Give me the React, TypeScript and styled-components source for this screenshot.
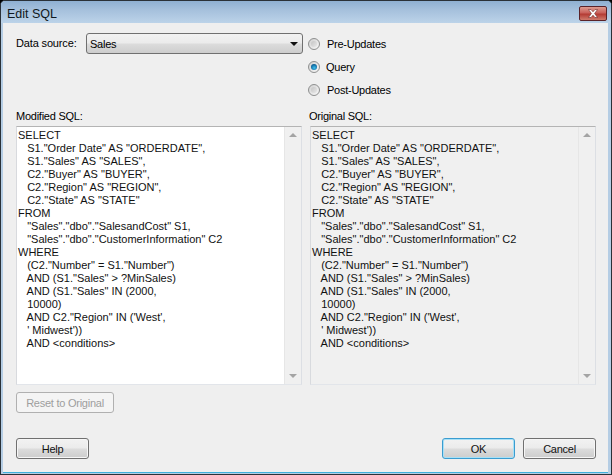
import React from "react";
import styled, { createGlobalStyle } from "styled-components";

const Global = createGlobalStyle`
  html, body { margin: 0; padding: 0; background: #000; }
  body { font-family: "Liberation Sans", Arial, sans-serif; font-size: 11px; color: #000; letter-spacing: -0.25px; }
`;

const Window = styled.div`
  box-sizing: border-box;
  width: 612px;
  height: 475px;
  display: flex;
  flex-direction: column;
  border: 1px solid #2a3138;
  border-radius: 5px 5px 0 0;
  background: #b5cde4;
  overflow: hidden;
`;

const TitleBar = styled.div`
  flex: none;
  height: 22px;
  display: flex;
  align-items: center;
  justify-content: space-between;
  padding: 0 4px 0 6px;
  background: linear-gradient(#8fb0d2, #a5c0dc 40%, #bcd3e9);
`;

const Title = styled.span`
  font-size: 12.5px;
  letter-spacing: 0;
  color: #101820;
  margin-top: 3px;
`;

const CloseButton = styled.div`
  width: 28px;
  height: 15px;
  margin-top: 2px;
  box-sizing: border-box;
  display: flex;
  align-items: center;
  justify-content: center;
  border: 1px solid #5a2228;
  border-radius: 2px;
  background: linear-gradient(#dd9c90, #c9605a 45%, #b43c34 55%, #cf7a6c);
`;

const Body = styled.div`
  flex: 1;
  margin: 0 3px 2px 2px;
  padding: 0 12px 13px 13px;
  box-sizing: border-box;
  display: flex;
  flex-direction: column;
  background: #efefef;
  box-shadow: 0 1px 0 #3fb0dc;
`;

const TopRow = styled.div`
  display: flex;
  height: 85px;
  padding-top: 10px;
  box-sizing: border-box;
`;

const SourceLabel = styled.label`
  width: 70px;
  margin-top: 3px;
  line-height: 14px;
  letter-spacing: -0.15px;
`;

const Select = styled.div`
  box-sizing: border-box;
  width: 217px;
  height: 21px;
  display: flex;
  align-items: center;
  justify-content: space-between;
  padding: 0 3px 0 3px;
  border: 1px solid #707070;
  border-radius: 3px;
  background: linear-gradient(#f2f2f2 0, #ebebeb 48%, #dcdcdc 52%, #cdcdcd 100%);
`;

const Caret = styled.div`
  width: 0;
  height: 0;
  border-left: 4px solid transparent;
  border-right: 4px solid transparent;
  border-top: 4px solid #111;
  margin-right: 1px;
`;

const RadioGroup = styled.div`
  margin-left: 5px;
  display: flex;
  flex-direction: column;
  gap: 10px;
  padding-top: 4px;
`;

const RadioRow = styled.div`
  display: flex;
  align-items: center;
  height: 13px;
  gap: ${(p) => (p.$tight ? 6 : 7)}px;
`;

const RadioDot = styled.div`
  box-sizing: border-box;
  width: 12px;
  height: 12px;
  border-radius: 50%;
  border: 1px solid #8e8f8f;
  display: flex;
  align-items: center;
  justify-content: center;
  background: linear-gradient(135deg, #d0d0d0, #f8f8f8);
  &::after {
    content: "";
    width: 6px;
    height: 6px;
    border-radius: 50%;
    background: ${(p) =>
      p.$on
        ? "radial-gradient(circle at 55% 65%, #3fc0ee, #0b5f96 70%, #0b3f6e)"
        : "linear-gradient(135deg, #c4c4c4, #e8e8e8)"};
  }
`;

const Panels = styled.div`
  display: grid;
  grid-template-columns: 286px 286px;
  column-gap: 8px;
`;

const Panel = styled.div`
  display: flex;
  flex-direction: column;
`;

const PanelLabel = styled.label`
  height: 17px;
  line-height: 14px;
  margin-top: 1px;
  margin-left: ${(p) => (p.$offset ? "-1px" : "0")};
`;

const SqlBox = styled.div`
  box-sizing: border-box;
  height: 259px;
  display: flex;
  justify-content: space-between;
  border: 1px solid;
  border-color: #b4b4b4 #dcdfe4 #e2e5ea #d8dade;
  background: ${(p) => (p.$disabled ? "#f0f0f0" : "#fff")};
`;

const SqlText = styled.pre`
  margin: 0;
  padding: 2px 0 0 1px;
  font-family: inherit;
  font-size: 11px;
  letter-spacing: 0;
  line-height: 13px;
  color: #111;
`;

const Scrollbar = styled.div`
  width: 17px;
  flex: none;
  box-sizing: border-box;
  display: flex;
  flex-direction: column;
  justify-content: space-between;
  align-items: center;
  padding: 6px 0;
  background: #f0f0f0;
  border-left: 1px solid #e6e6e6;
`;

const ArrowUp = styled.div`
  width: 0;
  height: 0;
  border-left: 4px solid transparent;
  border-right: 4px solid transparent;
  border-bottom: 4px solid #a4a4a4;
`;

const ArrowDown = styled.div`
  width: 0;
  height: 0;
  border-left: 4px solid transparent;
  border-right: 4px solid transparent;
  border-top: 4px solid #a4a4a4;
`;

const ResetButton = styled.button`
  box-sizing: border-box;
  width: 98px;
  height: 21px;
  margin-top: 7px;
  padding: 0;
  border: 1px solid #b0b0b0;
  border-radius: 3px;
  background: #f4f4f4;
  color: #9e9e9e;
  font: inherit;
  letter-spacing: inherit;
`;

const Footer = styled.div`
  margin-top: auto;
  display: flex;
  align-items: center;
`;

const DialogButton = styled.button`
  box-sizing: border-box;
  width: 73px;
  height: 21px;
  padding: 0;
  border: 1px solid ${(p) => (p.$primary ? "#3a9cd0" : "#707070")};
  border-radius: 3px;
  background: linear-gradient(#f2f2f2 0, #ebebeb 48%, #dcdcdc 52%, #cdcdcd 100%);
  box-shadow: ${(p) => (p.$primary ? "inset 0 0 0 1px #a8e0f6" : "inset 0 0 0 1px #f6f6f6")};
  color: #111;
  font: inherit;
  letter-spacing: inherit;
`;

const Spacer = styled.div`
  flex: 1;
`;

const CancelWrap = styled.div`
  margin-left: 8px;
`;

const sql = `SELECT
   S1."Order Date" AS "ORDERDATE",
   S1."Sales" AS "SALES",
   C2."Buyer" AS "BUYER",
   C2."Region" AS "REGION",
   C2."State" AS "STATE"
FROM
   "Sales"."dbo"."SalesandCost" S1,
   "Sales"."dbo"."CustomerInformation" C2
WHERE
   (C2."Number" = S1."Number")
   AND (S1."Sales" > ?MinSales)
   AND (S1."Sales" IN (2000,
   10000)
   AND C2."Region" IN ('West',
   ' Midwest'))
   AND <conditions>`;

const radios = [
  { label: "Pre-Updates", on: false },
  { label: "Query", on: true },
  { label: "Post-Updates", on: false },
];

export default function App() {
  return (
    <Window>
      <Global />
      <TitleBar>
        <Title>Edit SQL</Title>
        <CloseButton>
          <svg width="14" height="11" viewBox="0 0 14 11">
            <path
              d="M2.5 1.5h2.5L7 3.8 9 1.5h2.5L8.6 5.5l2.9 4H9L7 7.2 5 9.5H2.5l2.9-4z"
              fill="#fff"
              stroke="#6b2a28"
              strokeWidth="0.6"
            />
          </svg>
        </CloseButton>
      </TitleBar>
      <Body>
        <TopRow>
          <SourceLabel>Data source:</SourceLabel>
          <Select>
            Sales
            <Caret />
          </Select>
          <RadioGroup>
            {radios.map((r) => (
              <RadioRow key={r.label} $tight={r.on}>
                <RadioDot $on={r.on} />
                {r.label}
              </RadioRow>
            ))}
          </RadioGroup>
        </TopRow>
        <Panels>
          <Panel>
            <PanelLabel>Modified SQL:</PanelLabel>
            <SqlBox>
              <SqlText>{sql}</SqlText>
              <Scrollbar>
                <ArrowUp />
                <ArrowDown />
              </Scrollbar>
            </SqlBox>
          </Panel>
          <Panel>
            <PanelLabel $offset>Original SQL:</PanelLabel>
            <SqlBox $disabled>
              <SqlText>{sql}</SqlText>
              <Scrollbar>
                <ArrowUp />
                <ArrowDown />
              </Scrollbar>
            </SqlBox>
          </Panel>
        </Panels>
        <div>
          <ResetButton disabled>Reset to Original</ResetButton>
        </div>
        <Footer>
          <DialogButton>Help</DialogButton>
          <Spacer />
          <DialogButton $primary>OK</DialogButton>
          <CancelWrap>
            <DialogButton>Cancel</DialogButton>
          </CancelWrap>
        </Footer>
      </Body>
    </Window>
  );
}
